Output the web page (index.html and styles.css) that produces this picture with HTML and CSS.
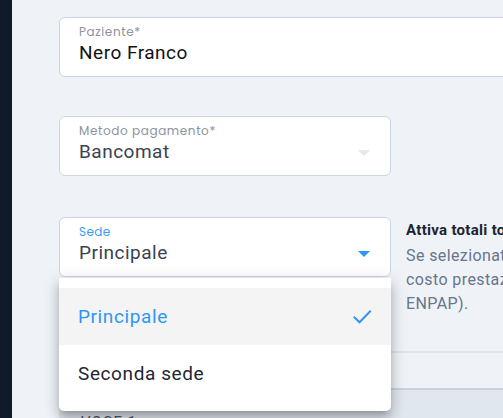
FILE: index.html
```html
<!DOCTYPE html>
<html lang="it">
<head>
<meta charset="utf-8">
<link rel="stylesheet" href="styles.css">
</head>
<body>
<div class="app">
  <aside class="sidebar"></aside>
  <main class="main">
    <div class="field field-wide">
      <span class="label">Paziente*</span>
      <span class="value value-dark">Nero Franco</span>
    </div>
    <div class="field field-mid">
      <span class="label">Metodo pagamento*</span>
      <span class="value">Bancomat</span>
      <span class="arrow arrow-faint"></span>
    </div>
    <div class="row">
      <div class="select-wrap">
        <div class="field field-focus">
          <span class="label label-blue">Sede</span>
          <span class="value">Principale</span>
          <span class="arrow arrow-blue"></span>
        </div>
        <ul class="menu">
          <li class="item item-active">Principale
            <svg class="check" width="24" height="24" viewBox="0 0 24 24"><path d="M4.5 12.5l5 4.8L20 6.5" fill="none" stroke="#2f96f3" stroke-width="2" stroke-linecap="square"/></svg>
          </li>
          <li class="item">Seconda sede</li>
        </ul>
      </div>
      <div class="info">
        <div class="info-title">Attiva totali totali</div>
        <div class="info-text">Se selezionato, il totale mostrerà il<br>costo prestazione comprensivo di (IVA e<br>ENPAP).</div>
      </div>
    </div>
    <div class="divider"></div>
    <section class="voce">
      <div class="voce-title">VOCE 1</div>
    </section>
  </main>
</div>
</body>
</html>
```
FILE: styles.css
```css
* { box-sizing: border-box; }
html, body { margin: 0; padding: 0; }
body {
  width: 503px;
  height: 418px;
  overflow: hidden;
  background: #eff3f8;
  font-family: Roboto, "Liberation Sans", sans-serif;
}
.app { display: flex; height: 418px; }
.sidebar { width: 12px; flex: none; background: #111a2b; }
.main {
  flex: 1;
  min-width: 0;
  padding: 17px 0 0 47px;
  display: flex;
  flex-direction: column;
  overflow: hidden;
}
.field {
  position: relative;
  height: 60px;
  background: #fff;
  border: 1px solid #cdd5e2;
  border-radius: 6px;
  padding: 7px 20px 0 19px;
  display: flex;
  flex-direction: column;
  flex: none;
}
.field-wide { width: 470px; }
.field-mid { width: 332px; margin-top: 39px; }
.field-focus { width: 332px; }
.label {
  font-family: Poppins, "Open Sans", Roboto, sans-serif;
  font-size: 12px;
  line-height: 14px;
  letter-spacing: 0.6px;
  color: #8c939e;
}
.label-blue { color: #3a9bf2; letter-spacing: 0.4px; }
.value {
  font-size: 19px;
  line-height: 27px;
  color: #3a4250;
  letter-spacing: 0.5px;
}
.value-dark { color: #111; }
.arrow {
  position: absolute;
  right: 20px;
  top: 33px;
  width: 0;
  height: 0;
  border-left: 6px solid transparent;
  border-right: 6px solid transparent;
  border-top: 6px solid #e6e8ee;
}
.arrow-blue { border-top-color: #2f96f3; }
.row {
  display: flex;
  gap: 15px;
  margin-top: 41px;
  flex: none;
}
.select-wrap { position: relative; flex: none; }
.menu {
  position: absolute;
  z-index: 5;
  left: 0;
  top: 61px;
  width: 332px;
  margin: 0;
  padding: 10px 0 9px;
  list-style: none;
  background: #fff;
  border-radius: 0 0 5px 5px;
  box-shadow: 0 5px 6px -3px rgba(0,0,0,0.2), 0 9px 12px 1px rgba(0,0,0,0.14), 0 3px 16px 2px rgba(0,0,0,0.12);
}
.item {
  height: 57px;
  display: flex;
  align-items: center;
  justify-content: space-between;
  padding: 0 17px 0 19px;
  font-size: 19px;
  letter-spacing: 0.6px;
  color: #1f2633;
}
.item-active { background: #f4f4f5; color: #2f96f3; }
.check { flex: none; }
.info { padding-top: 4px; width: 320px; flex: none; }
.info-title {
  font-size: 15px;
  font-weight: 700;
  color: #1c2431;
  line-height: 18px;
  letter-spacing: 0.3px;
  white-space: nowrap;
}
.info-text {
  margin-top: 5px;
  font-size: 16px;
  line-height: 24px;
  color: #67758b;
  letter-spacing: 0.4px;
  white-space: nowrap;
}
.divider {
  flex: none;
  height: 2px;
  margin-top: 35px;
  background: #dde4ed;
}
.voce {
  flex: none;
  margin-top: 35px;
  height: 60px;
  background: #e1e7ef;
  border-top: 2px solid #c9d2df;
  padding: 23px 0 0 22px;
}
.voce-title {
  font-size: 15px;
  color: #4b5565;
  letter-spacing: 1px;
}
```
